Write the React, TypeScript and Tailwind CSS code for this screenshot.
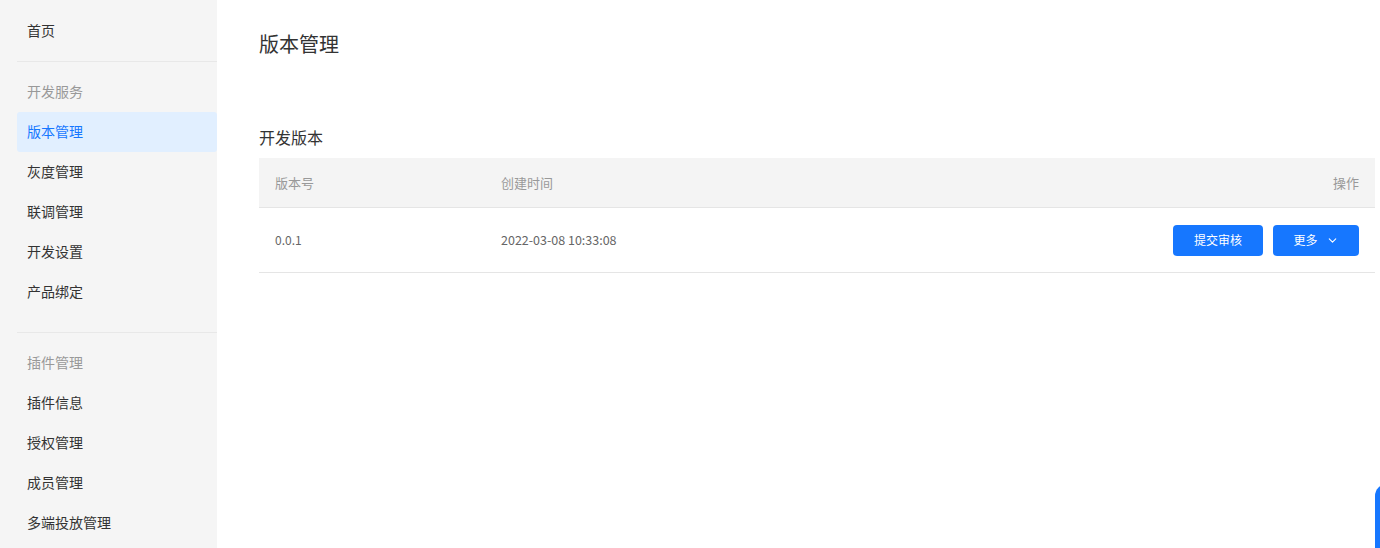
import { ChevronDown } from 'lucide-react'

const groups = [
  {
    label: '开发服务',
    items: ['版本管理', '灰度管理', '联调管理', '开发设置', '产品绑定'],
  },
  {
    label: '插件管理',
    items: ['插件信息', '授权管理', '成员管理', '多端投放管理'],
  },
]

const font = { fontFamily: '"Noto Sans CJK SC", "Noto Sans", sans-serif' }

export default function App() {
  return (
    <div className="flex h-[548px] w-[1380px] overflow-hidden bg-white relative" style={font}>
      {/* 侧边栏 */}
      <aside className="w-[217px] shrink-0 bg-[#f5f5f5] pl-[17px] pt-[11px]">
        <div className="h-10 flex items-center pl-[10px] pb-[2px] text-sm text-[#333]">首页</div>
        <div className="h-px bg-[#e8e8e8] my-[10px]" />
        {groups.map((g, gi) => (
          <div key={g.label}>
            {gi > 0 && <div className="h-px bg-[#e8e8e8] mt-5 mb-[10px]" />}
            <div className="h-10 flex items-center pl-[10px] pb-[2px] text-sm text-[#999]">{g.label}</div>
            {g.items.map((item) => {
              const active = item === '版本管理'
              return (
                <div
                  key={item}
                  className={
                    active
                      ? 'h-10 flex items-center pl-[10px] pb-[2px] text-sm rounded-[3px] bg-[#e1efff] text-[#1677ff]'
                      : 'h-10 flex items-center pl-[10px] pb-[2px] text-sm text-[#333]'
                  }
                >
                  {item}
                </div>
              )
            })}
          </div>
        ))}
      </aside>

      {/* 主内容 */}
      <main className="flex-1 pl-[42px] pr-[5px] pt-[29px]">
        <h1 className="text-[20px] leading-[30px] text-[#333]">版本管理</h1>
        <h2 className="mt-[66px] text-base leading-6 text-[#333]">开发版本</h2>
        <div className="mt-[9px]">
          <div className="flex items-center h-[50px] bg-[#f4f4f4] border-b border-[#e5e5e5] px-4 text-[13px] text-[#999]">
            <div className="w-[226px]">版本号</div>
            <div className="flex-1">创建时间</div>
            <div>操作</div>
          </div>
          <div className="flex items-center h-[65px] border-b border-[#e5e5e5] px-4 text-xs text-[#666]">
            <div className="w-[226px]">0.0.1</div>
            <div className="flex-1 text-[12.5px]">2022-03-08 10:33:08</div>
            <div className="flex gap-[10px]">
              <button className="h-[31px] w-[90px] rounded bg-[#1677ff] text-white text-xs">提交审核</button>
              <button className="h-[31px] w-[86px] rounded bg-[#1677ff] text-white text-xs flex items-center justify-center gap-2">
                更多
                <ChevronDown size={13} strokeWidth={2} />
              </button>
            </div>
          </div>
        </div>
      </main>

      {/* 右下角浮动按钮 */}
      <div className="absolute left-[1375px] top-[484px] w-12 h-20 rounded-tl-[12px] bg-[#1677ff]" />
    </div>
  )
}
